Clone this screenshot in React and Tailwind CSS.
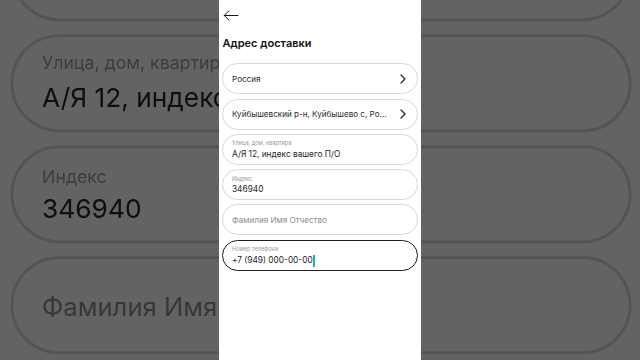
import React from "react";

const FONT = { fontFamily: "Inter, 'Noto Sans', 'DejaVu Sans', sans-serif" };

function Chevron() {
  return (
    <svg width="6" height="10" viewBox="0 0 6 10" fill="none" className="shrink-0">
      <path d="M1 1 L5 5 L1 9" stroke="#2a2a2a" strokeWidth="1.3" strokeLinecap="round" strokeLinejoin="round" />
    </svg>
  );
}

function SelectField({ value }) {
  return (
    <div className="h-[31px] rounded-full border border-[#d8d8d8] flex items-center pl-[9px] pr-[11px] justify-between">
      <span className="text-[8.1px] text-[#2b2b2b] leading-none whitespace-nowrap">{value}</span>
      <Chevron />
    </div>
  );
}

function InputField({ label, value, active, cursor }) {
  return (
    <div
      className={
        "h-[31px] rounded-full flex flex-col pl-[9px] pt-[5.5px] " +
        (active ? "border-[1.5px] border-[#1e1e1e]" : "border border-[#d8d8d8]")
      }
    >
      <span className="text-[5.6px] leading-[7px] text-[#9a9a9a] whitespace-nowrap">{label}</span>
      <span className="mt-[1.5px] text-[8.3px] leading-[11px] text-[#262626] whitespace-nowrap flex items-center">
        {value}
        {cursor && <span className="inline-block w-[1.5px] h-[12px] bg-[#14b8a6] ml-[0.5px]" />}
      </span>
    </div>
  );
}

function PlaceholderField({ text }) {
  return (
    <div className="h-[31px] rounded-full border border-[#d8d8d8] flex items-center pl-[9px]">
      <span className="text-[8.1px] text-[#8d8d8d] leading-none whitespace-nowrap">{text}</span>
    </div>
  );
}

function Phone() {
  return (
    <div className="w-[202px] h-[360px] bg-white flex flex-col px-[3px] shrink-0" style={FONT}>
      <div className="h-[30px] flex items-center pl-[0.5px]">
        <svg width="16" height="11" viewBox="0 0 16 11" fill="none">
          <path d="M15 5.5 H1.2 M5.8 1 L1.2 5.5 L5.8 10" stroke="#1a1a1a" strokeWidth="1" strokeLinecap="round" strokeLinejoin="round" />
        </svg>
      </div>
      <div className="mt-[5px] h-[16px] flex items-center pl-[0.5px] text-[11px] font-semibold text-[#141414] whitespace-nowrap">
        Адрес доставки
      </div>
      <div className="mt-[12.3px] flex flex-col gap-[4.3px]">
        <SelectField value="Россия" />
        <SelectField value="Куйбышевский р-н, Куйбышево с, Ро..." />
        <InputField label="Улица, дом, квартира" value="А/Я 12, индекс вашего П/О" />
        <InputField label="Индекс" value="346940" />
        <PlaceholderField text="Фамилия Имя Отчество" />
        <InputField label="Номер телефона" value="+7 (949) 000-00-00" active cursor />
      </div>
    </div>
  );
}

export default function App() {
  return (
    <div className="relative w-[640px] h-[360px] overflow-hidden bg-[#636363]">
      <div aria-hidden="true" className="absolute inset-0 flex justify-center items-center pointer-events-none">
        <div className="scale-[3.17] brightness-[.39] translate-x-[1px]">
          <Phone />
        </div>
      </div>
      <div className="relative flex justify-center">
        <Phone />
      </div>
    </div>
  );
}
